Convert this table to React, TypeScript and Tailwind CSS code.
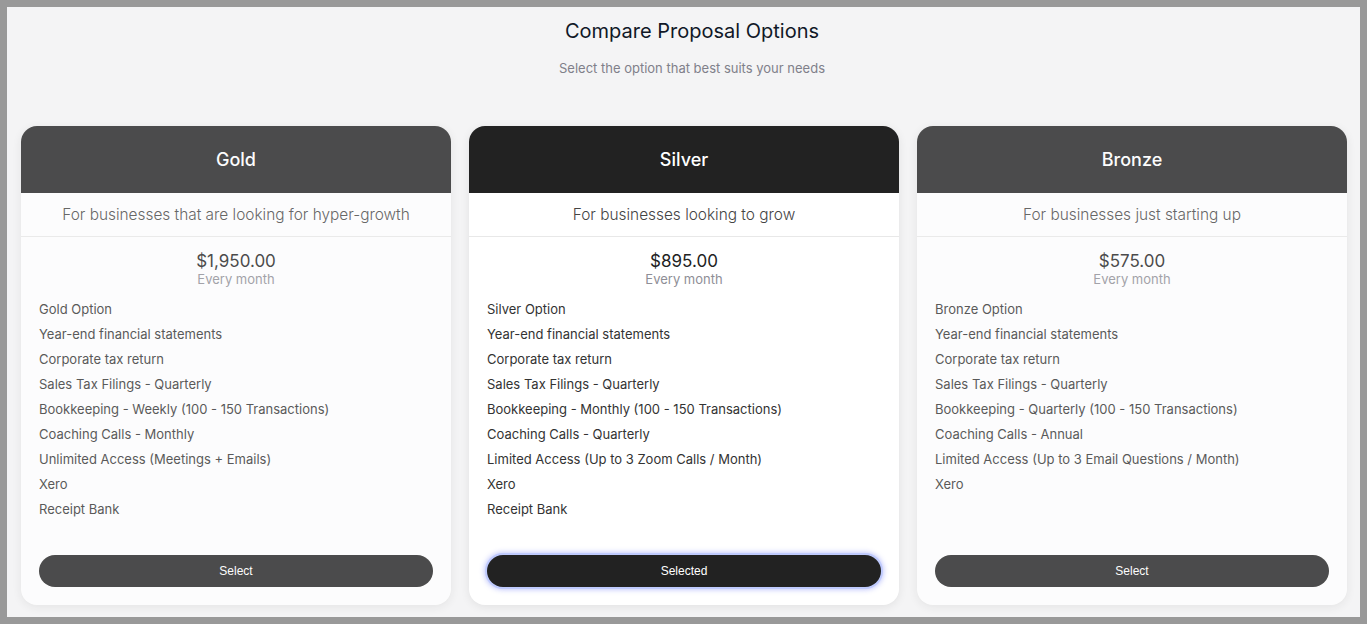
import React from "react";

type Plan = {
  name: string;
  tagline: string;
  price: string;
  features: string[];
  selected?: boolean;
};

const plans: Plan[] = [
  {
    name: "Gold",
    tagline: "For businesses that are looking for hyper-growth",
    price: "$1,950.00",
    features: [
      "Gold Option",
      "Year-end financial statements",
      "Corporate tax return",
      "Sales Tax Filings - Quarterly",
      "Bookkeeping - Weekly (100 - 150 Transactions)",
      "Coaching Calls - Monthly",
      "Unlimited Access (Meetings + Emails)",
      "Xero",
      "Receipt Bank",
    ],
  },
  {
    name: "Silver",
    tagline: "For businesses looking to grow",
    price: "$895.00",
    selected: true,
    features: [
      "Silver Option",
      "Year-end financial statements",
      "Corporate tax return",
      "Sales Tax Filings - Quarterly",
      "Bookkeeping - Monthly (100 - 150 Transactions)",
      "Coaching Calls - Quarterly",
      "Limited Access (Up to 3 Zoom Calls / Month)",
      "Xero",
      "Receipt Bank",
    ],
  },
  {
    name: "Bronze",
    tagline: "For businesses just starting up",
    price: "$575.00",
    features: [
      "Bronze Option",
      "Year-end financial statements",
      "Corporate tax return",
      "Sales Tax Filings - Quarterly",
      "Bookkeeping - Quarterly (100 - 150 Transactions)",
      "Coaching Calls - Annual",
      "Limited Access (Up to 3 Email Questions / Month)",
      "Xero",
    ],
  },
];

function Card({ plan }: { plan: Plan }) {
  return (
    <div
      className={
        "flex h-[479px] flex-col overflow-hidden rounded-[16px] bg-white shadow-[0_2px_10px_rgba(0,0,0,0.08)] " +
        (plan.selected ? "" : "opacity-80")
      }
    >
      <div className="flex h-[67px] items-center justify-center bg-[#222222] text-[18px] font-medium text-white">
        {plan.name}
      </div>
      <div className="flex h-[44px] items-center justify-center border-b border-[#e8e8e8] text-[15.4px] font-light text-[#444]">
        {plan.tagline}
      </div>
      <div className="flex flex-col items-center pt-[14px]">
        <div className="text-[17px] leading-[20px] text-[#222]">{plan.price}</div>
        <div className="text-[13px] leading-[16px] text-[#8e8e96]">Every month</div>
      </div>
      <ul className="mt-[10px] flex-1 px-[18px]">
        {plan.features.map((f) => (
          <li key={f} className="h-[25px] text-[13px] leading-[25px] text-[#333]">
            {f}
          </li>
        ))}
      </ul>
      <div className="px-[18px] pb-[18px]">
        <button
          className={
            "h-[32px] w-full rounded-full bg-[#222222] text-[12px] font-medium text-white [font-family:'Liberation_Sans',Arial,sans-serif] " +
            (plan.selected
              ? "shadow-[0_0_0_2px_#bfcafd,0_0_5px_3px_rgba(129,140,248,0.45)]"
              : "")
          }
        >
          {plan.selected ? "Selected" : "Select"}
        </button>
      </div>
    </div>
  );
}

export default function App() {
  return (
    <div className="h-[624px] w-full bg-[#999999] p-[7px] [font-family:Inter,'Noto_Sans',sans-serif]">
      <div className="flex h-full flex-col bg-[#f4f4f5] pl-[14px] pr-[13px]">
        <div className="flex flex-col items-center pl-[16px] pt-[12px]">
          <h1 className="text-[20px] leading-[24px] text-[#111827]">Compare Proposal Options</h1>
          <p className="mt-[15px] text-[13px] leading-[20px] text-[#80808a]">
            Select the option that best suits your needs
          </p>
        </div>
        <div className="mt-[48px] grid grid-cols-3 gap-[18px]">
          {plans.map((p) => (
            <Card key={p.name} plan={p} />
          ))}
        </div>
      </div>
    </div>
  );
}
